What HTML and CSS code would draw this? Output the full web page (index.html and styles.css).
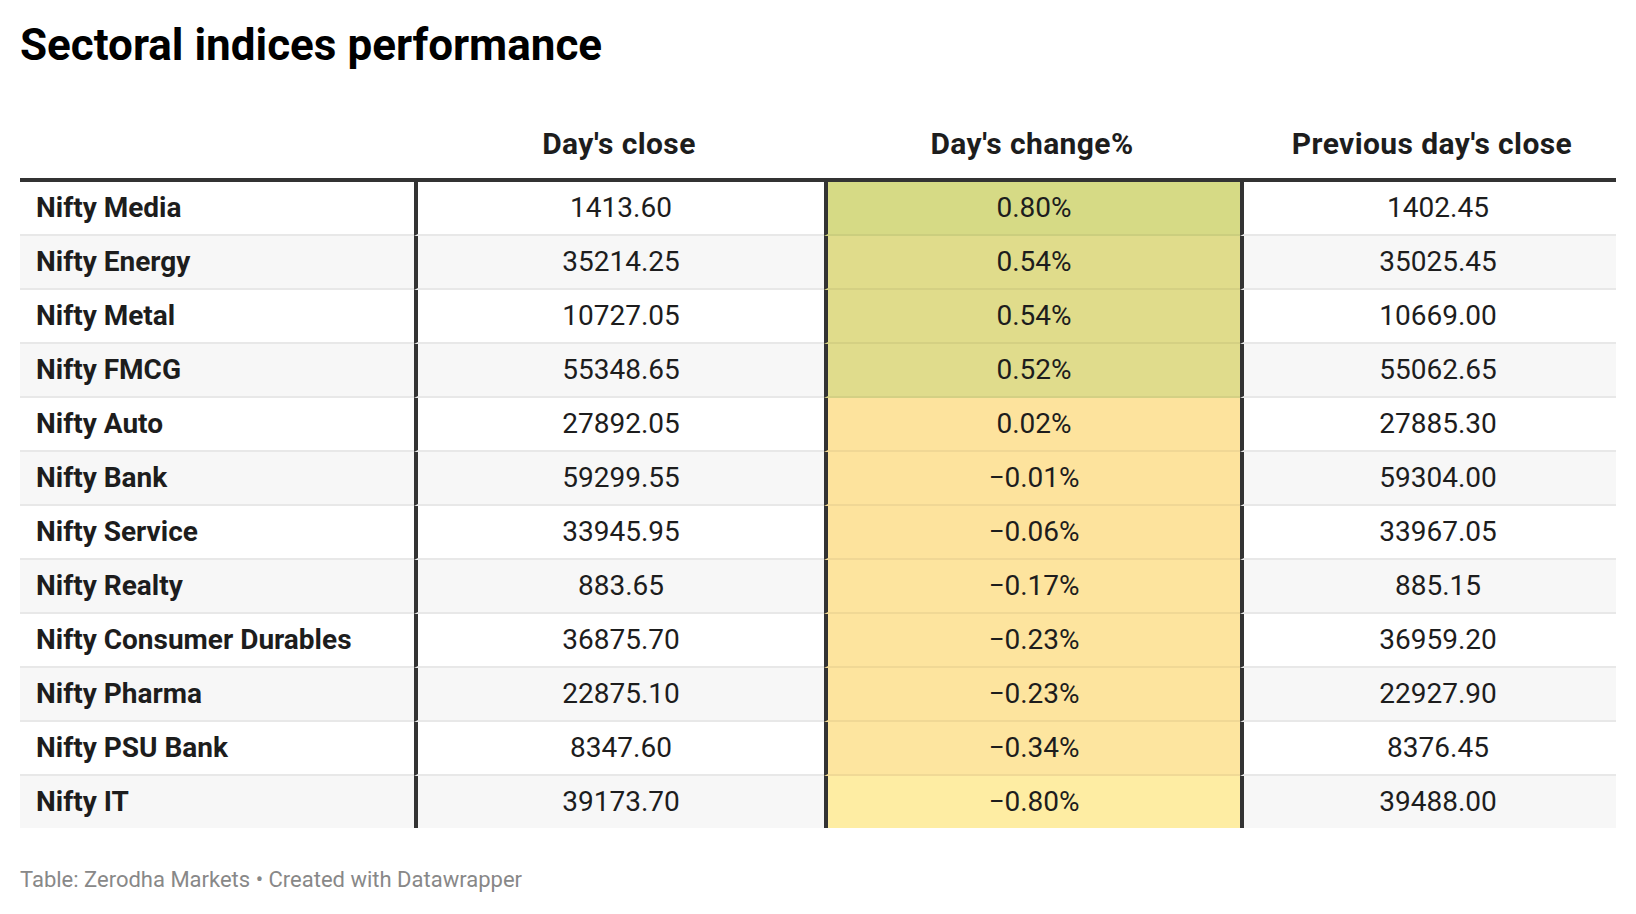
FILE: index.html
```html
<!DOCTYPE html>
<html lang="en">
<head>
<meta charset="utf-8">
<title>Sectoral indices performance</title>
<link rel="stylesheet" href="styles.css">
</head>
<body>
<div class="chart">
  <h1 class="title">Sectoral indices performance</h1>
  <div class="table">
    <div class="row head">
      <div class="th"></div>
      <div class="th">Day's close</div>
      <div class="th">Day's change%</div>
      <div class="th prev">Previous day's close</div>
    </div>
    <div class="row">
      <div class="td name">Nifty Media</div>
      <div class="td num">1413.60</div>
      <div class="td num chg c1">0.80%</div>
      <div class="td num prev">1402.45</div>
    </div>
    <div class="row alt">
      <div class="td name">Nifty Energy</div>
      <div class="td num">35214.25</div>
      <div class="td num chg c2">0.54%</div>
      <div class="td num prev">35025.45</div>
    </div>
    <div class="row">
      <div class="td name">Nifty Metal</div>
      <div class="td num">10727.05</div>
      <div class="td num chg c2">0.54%</div>
      <div class="td num prev">10669.00</div>
    </div>
    <div class="row alt">
      <div class="td name">Nifty FMCG</div>
      <div class="td num">55348.65</div>
      <div class="td num chg c3">0.52%</div>
      <div class="td num prev">55062.65</div>
    </div>
    <div class="row">
      <div class="td name">Nifty Auto</div>
      <div class="td num">27892.05</div>
      <div class="td num chg c4">0.02%</div>
      <div class="td num prev">27885.30</div>
    </div>
    <div class="row alt">
      <div class="td name">Nifty Bank</div>
      <div class="td num">59299.55</div>
      <div class="td num chg c4">−0.01%</div>
      <div class="td num prev">59304.00</div>
    </div>
    <div class="row">
      <div class="td name">Nifty Service</div>
      <div class="td num">33945.95</div>
      <div class="td num chg c4">−0.06%</div>
      <div class="td num prev">33967.05</div>
    </div>
    <div class="row alt">
      <div class="td name">Nifty Realty</div>
      <div class="td num">883.65</div>
      <div class="td num chg c5">−0.17%</div>
      <div class="td num prev">885.15</div>
    </div>
    <div class="row">
      <div class="td name">Nifty Consumer Durables</div>
      <div class="td num">36875.70</div>
      <div class="td num chg c5">−0.23%</div>
      <div class="td num prev">36959.20</div>
    </div>
    <div class="row alt">
      <div class="td name">Nifty Pharma</div>
      <div class="td num">22875.10</div>
      <div class="td num chg c5">−0.23%</div>
      <div class="td num prev">22927.90</div>
    </div>
    <div class="row">
      <div class="td name">Nifty PSU Bank</div>
      <div class="td num">8347.60</div>
      <div class="td num chg c6">−0.34%</div>
      <div class="td num prev">8376.45</div>
    </div>
    <div class="row alt last">
      <div class="td name">Nifty IT</div>
      <div class="td num">39173.70</div>
      <div class="td num chg c7">−0.80%</div>
      <div class="td num prev">39488.00</div>
    </div>
  </div>
  <div class="footer">Table: Zerodha Markets • Created with Datawrapper</div>
</div>
</body>
</html>
```

FILE: styles.css
```css
* { box-sizing: border-box; }

html, body {
  margin: 0;
  padding: 0;
  background: #ffffff;
}

body {
  font-family: Roboto, "Liberation Sans", Arial, sans-serif;
  color: #1d1d1d;
}

.chart {
  padding: 20px 20px 0 20px;
}

.title {
  margin: 0;
  font-size: 44px;
  font-weight: 700;
  line-height: 1.172;
  color: #000000;
}

.table {
  margin-top: 55px;
  width: 1596px;
}

.row {
  display: grid;
  grid-template-columns: 394px 410px 416px 376px;
  background: #ffffff;
}

.row.alt {
  background: #f7f7f7;
}

.head {
  border-bottom: 4px solid #333333;
}

.th {
  font-size: 30px;
  font-weight: 700;
  line-height: 34px;
  letter-spacing: 0.4px;
  text-align: center;
  padding-bottom: 17px;
}

.th.prev {
  padding-left: 8px;
}

.td {
  height: 54px;
  font-size: 28px;
  line-height: 32px;
  display: flex;
  align-items: center;
  border-bottom: 2px solid #e8e8e8;
}

.last .td {
  height: 52px;
  border-bottom: none;
}

.name {
  font-weight: 700;
  padding-left: 16px;
}

.num {
  justify-content: center;
  border-left: 4px solid #333333;
  font-weight: 400;
}

.td.prev {
  padding-left: 16px;
}

.chg {
  border-bottom-color: rgba(0, 0, 0, 0.05);
}

.c1 { background: #d6da85; }
.c2 { background: #e0dc8b; }
.c3 { background: #e0dc8c; }
.c4 { background: #fde39d; }
.c5 { background: #fde49e; }
.c6 { background: #fde59f; }
.c7 { background: #feeda3; }

.footer {
  margin-top: 39px;
  font-size: 22px;
  line-height: 26px;
  color: #888888;
}
```
